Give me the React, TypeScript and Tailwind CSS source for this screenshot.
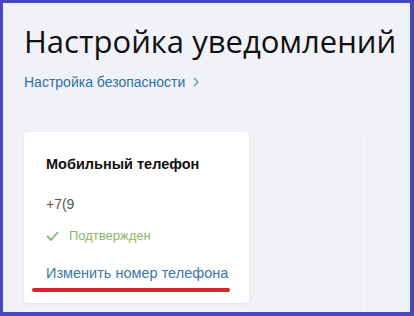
import React from 'react';

const App: React.FC = () => {
  return (
    <div className="w-[414px] h-[316px] overflow-hidden bg-[#4747c2] pt-[3px] pl-[3px] pr-[4px] pb-[4px]">
      <div className="h-full bg-[#f1f2f7] relative overflow-hidden">
        <div className="pl-[21px] pt-[16px]">
          <h1 className="text-[31px] leading-[44px] text-[#111] font-['Open_Sans',sans-serif] whitespace-nowrap">Настройка уведомлений</h1>
          <a className="mt-[10px] flex items-center gap-[8px] text-[14px] leading-[18px] text-[#2f6fa3] font-['Liberation_Sans',Arial,sans-serif]">
            Настройка безопасности
            <svg width="6" height="10" viewBox="0 0 6 10" fill="none" stroke="#5a8ab3" strokeWidth="1.2"><path d="M1 1l4 4-4 4"/></svg>
          </a>
        </div>
        <div className="flex mt-[41px]">
          <div className="ml-[21px] w-[225px] h-[171px] bg-white rounded-[4px] shadow-[0_1px_4px_rgba(0,0,0,0.06)] pl-[22px] pt-[24px] font-['Liberation_Sans',Arial,sans-serif]">
            <div className="text-[14.5px] leading-[16px] font-bold text-[#111]">Мобильный телефон</div>
            <div className="mt-[24px] text-[14px] leading-[16px] text-[#555]">+7(9</div>
            <div className="mt-[16px] flex items-center gap-[10px] text-[13px] leading-[16px] text-[#8ab66c]">
              <svg width="13" height="10" viewBox="0 0 13 10" fill="none" stroke="#8ab66c" strokeWidth="1.8"><path d="M1 5l4 4 7-8"/></svg>
              Подтвержден
            </div>
            <div className="mt-[20px] text-[14.5px] leading-[18px] text-[#3a77a8]">Изменить номер телефона</div>
            <div className="mt-[6px] -ml-[14px] w-[198px] h-[4px] rounded-full bg-[#d9232b]"></div>
          </div>
          <div className="ml-[115px] mt-[3px] w-px h-[200px] bg-[#f8f9fc]"></div>
        </div>
      </div>
    </div>
  );
};

export default App;
